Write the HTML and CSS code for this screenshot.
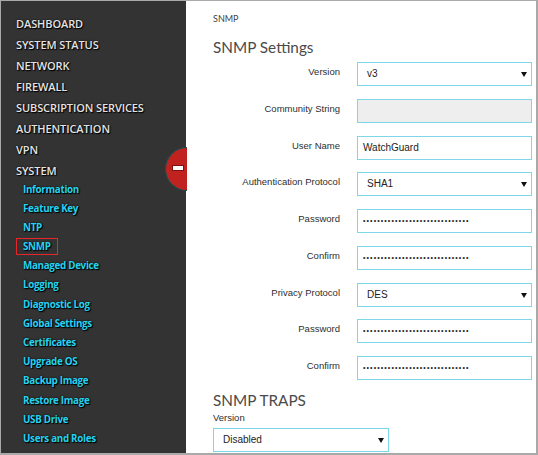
FILE: index.html
```html
<!DOCTYPE html>
<html>
<head>
<meta charset="utf-8">
<link rel="stylesheet" href="styles.css">
</head>
<body>
<div class="frame">
  <nav class="sidebar">
    <ul class="menu">
      <li>DASHBOARD</li>
      <li>SYSTEM STATUS</li>
      <li>NETWORK</li>
      <li>FIREWALL</li>
      <li>SUBSCRIPTION SERVICES</li>
      <li>AUTHENTICATION</li>
      <li>VPN</li>
      <li>SYSTEM</li>
    </ul>
    <ul class="submenu">
      <li>Information</li>
      <li>Feature Key</li>
      <li>NTP</li>
      <li><span class="active">SNMP</span></li>
      <li>Managed Device</li>
      <li>Logging</li>
      <li>Diagnostic Log</li>
      <li>Global Settings</li>
      <li>Certificates</li>
      <li>Upgrade OS</li>
      <li>Backup Image</li>
      <li>Restore Image</li>
      <li>USB Drive</li>
      <li>Users and Roles</li>
    </ul>
    <div class="collapse"><span class="minus"></span></div>
  </nav>
  <main class="content">
    <div class="crumb">SNMP</div>
    <h1 class="title">SNMP Settings</h1>
    <div class="form">
      <label>Version</label>
      <div class="field select">v3<svg class="arrow" width="6" height="5" viewBox="0 0 6 5"><path d="M0 0h6L3 5z" fill="#111"/></svg></div>
      <label>Community String</label>
      <div class="field disabled"></div>
      <label>User Name</label>
      <div class="field text">WatchGuard</div>
      <label>Authentication Protocol</label>
      <div class="field select">SHA1<svg class="arrow" width="6" height="5" viewBox="0 0 6 5"><path d="M0 0h6L3 5z" fill="#111"/></svg></div>
      <label>Password</label>
      <div class="field pw">••••••••••••••••••••••••••••••</div>
      <label>Confirm</label>
      <div class="field pw">••••••••••••••••••••••••••••••</div>
      <label>Privacy Protocol</label>
      <div class="field select">DES<svg class="arrow" width="6" height="5" viewBox="0 0 6 5"><path d="M0 0h6L3 5z" fill="#111"/></svg></div>
      <label>Password</label>
      <div class="field pw">••••••••••••••••••••••••••••••</div>
      <label>Confirm</label>
      <div class="field pw">••••••••••••••••••••••••••••••</div>
    </div>
    <h2 class="title2">SNMP TRAPS</h2>
    <div class="small-label">Version</div>
    <div class="field select traps">Disabled<svg class="arrow" width="6" height="5" viewBox="0 0 6 5"><path d="M0 0h6L3 5z" fill="#111"/></svg></div>
  </main>
</div>
</body>
</html>
```
FILE: styles.css
```css
html, body {
  margin: 0;
  padding: 0;
  background: #fff;
}
.frame {
  width: 538px;
  height: 455px;
  box-sizing: border-box;
  border: 1px solid #a9a9a9;
  border-right-width: 2px;
  border-bottom-width: 2px;
  display: flex;
  overflow: hidden;
}
.sidebar {
  position: relative;
  width: 185px;
  flex: none;
  background: #333333;
  padding-top: 12px;
  box-sizing: border-box;
  z-index: 1;
  overflow: visible;
}
.menu, .submenu {
  list-style: none;
  margin: 0;
  padding: 0;
}
.menu li {
  height: 21px;
  line-height: 21px;
  padding-left: 15px;
  font-family: "Open Sans", sans-serif;
  font-weight: 600;
  font-size: 11px;
  letter-spacing: -0.1px;
  color: #e4e4e4;
  text-shadow: 0 0 2px #000, 1px 1px 1px #000;
  white-space: nowrap;
}
.submenu {
  margin-top: -1.5px;
}
.submenu li {
  height: 19.2px;
  line-height: 19.2px;
  padding-left: 22px;
  font-family: "Open Sans", sans-serif;
  font-weight: 700;
  font-size: 9.8px;
  letter-spacing: -0.3px;
  color: #26d3f0;
  text-shadow: 0 0 2px #000, 1px 1px 1px #000;
  white-space: nowrap;
}
.submenu .active {
  display: inline-block;
  line-height: 15px;
  padding: 0 6px 0 6px;
  margin-left: -7px;
  border: 1.5px solid #e8262a;
}
.collapse {
  position: absolute;
  left: 165px;
  top: 147px;
  width: 42px;
  height: 42px;
  border-radius: 50%;
  background: #c0231f;
  box-shadow: 0 0 0 1px #1e4e52;
  clip-path: inset(-2px 21px -2px -2px);
  box-sizing: border-box;
}
.minus {
  position: absolute;
  left: 7px;
  top: 18px;
  width: 10px;
  height: 4px;
  background: #fff;
  box-shadow: 0 0 0 1px #7a1210;
}
.content {
  flex: 1;
  padding: 0 4px 0 27px;
  font-family: "Liberation Sans", Arial, sans-serif;
  color: #333;
}
.crumb {
  margin-top: 12px;
  font-size: 9px;
  line-height: 12px;
  color: #444;
  font-family: "Lato", sans-serif;
}
.title {
  margin: 12px 0 0 0;
  font-family: "Lato", sans-serif;
  font-weight: 400;
  font-size: 15.3px;
  line-height: 20px;
  color: #4a4a4a;
}
.form {
  margin-top: 5px;
  display: grid;
  grid-template-columns: 127px 175px;
  column-gap: 17px;
  row-gap: 12.75px;
}
.form label {
  text-align: right;
  font-size: 9.5px;
  line-height: 12px;
  padding-top: 4px;
  color: #2e2e2e;
}
.field {
  position: relative;
  height: 24px;
  box-sizing: border-box;
  border: 1px solid #7fd6e8;
  background: #fff;
  font-size: 10px;
  line-height: 22px;
  color: #222;
  padding-left: 9px;
}
.field.text {
  padding-left: 5px;
}
.field.disabled {
  background: #eeeeee;
}
.field.pw {
  padding-left: 5px;
  font-size: 7px;
  letter-spacing: 1.1px;
  color: #222;
}
.arrow {
  position: absolute;
  right: 4px;
  top: 9px;
}
.title2 {
  margin: 10px 0 0 0;
  font-family: "Lato", sans-serif;
  font-weight: 400;
  font-size: 15.3px;
  line-height: 20px;
  color: #4a4a4a;
}
.small-label {
  font-size: 9.5px;
  line-height: 12px;
  margin-top: 2px;
  color: #2e2e2e;
}
.field.traps {
  margin-top: 4px;
  width: 176px;
}
```
